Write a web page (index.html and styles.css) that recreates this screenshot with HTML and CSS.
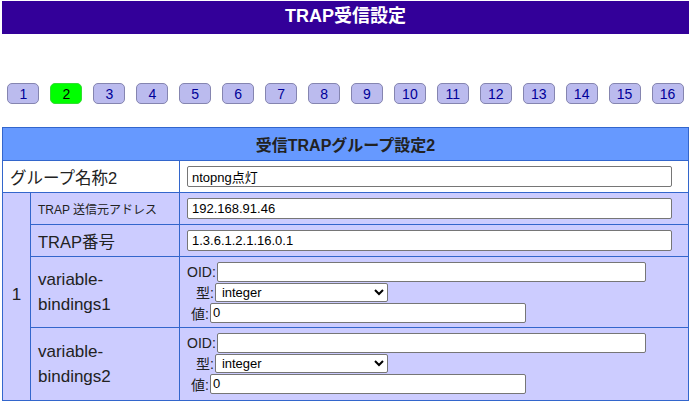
FILE: index.html
```html
<!DOCTYPE html>
<html lang="ja">
<head>
    <meta charset="UTF-8">
    <title>TRAP受信設定</title>
    <link rel="stylesheet" href="styles.css">
</head>
<body>
    <div class="title">TRAP受信設定</div>

    <div class="tabs">
        <button class="tab">1</button>
        <button class="tab active">2</button>
        <button class="tab">3</button>
        <button class="tab">4</button>
        <button class="tab">5</button>
        <button class="tab">6</button>
        <button class="tab">7</button>
        <button class="tab">8</button>
        <button class="tab">9</button>
        <button class="tab">10</button>
        <button class="tab">11</button>
        <button class="tab">12</button>
        <button class="tab">13</button>
        <button class="tab">14</button>
        <button class="tab">15</button>
        <button class="tab">16</button>
    </div>

    <table class="group">
        <tr>
            <th colspan="3">受信TRAPグループ設定2</th>
        </tr>
        <tr class="name-row">
            <td colspan="2" class="label">グループ名称2</td>
            <td class="value"><input type="text" class="wide" value="ntopng点灯"></td>
        </tr>
        <tr>
            <td rowspan="4" class="num">1</td>
            <td class="label small">TRAP 送信元アドレス</td>
            <td class="value"><input type="text" class="wide" value="192.168.91.46"></td>
        </tr>
        <tr>
            <td class="label">TRAP番号</td>
            <td class="value"><input type="text" class="wide" value="1.3.6.1.2.1.16.0.1"></td>
        </tr>
        <tr>
            <td class="label latin">variable-<br>bindings1</td>
            <td class="value binds">
                <div class="line oid">OID:<input type="text"></div>
                <div class="line type">型:<select><option>integer</option></select></div>
                <div class="line val">値:<input type="text" value="0"></div>
            </td>
        </tr>
        <tr class="last">
            <td class="label latin">variable-<br>bindings2</td>
            <td class="value binds">
                <div class="line oid">OID:<input type="text"></div>
                <div class="line type">型:<select><option>integer</option></select></div>
                <div class="line val">値:<input type="text" value="0"></div>
            </td>
        </tr>
    </table>
</body>
</html>
```

FILE: styles.css
```css
body {
    margin: 1px 4px 0 2px;
    font-family: "Liberation Sans", "Noto Sans CJK JP", sans-serif;
    background: white;
    color: #222;
}
.title {
    background: #330099;
    color: white;
    font-weight: bold;
    font-size: 18px;
    text-align: center;
    height: 33px;
    line-height: 31px;
}
.tabs {
    display: grid;
    grid-template-columns: repeat(16, 1fr);
    justify-items: center;
    margin-top: 49px;
}
.tab {
    width: 32px;
    height: 21px;
    padding: 0;
    font-family: "Liberation Sans", sans-serif;
    font-size: 14px;
    color: #000099;
    background: #bbbbee;
    border: 1px solid #8585b0;
    border-radius: 5px;
}
.tab.active {
    background: #00ff00;
    border-color: #33dd33;
    color: #000;
}
.group {
    margin-top: 23px;
    width: 100%;
    border-collapse: collapse;
    border: 1px solid #3366cc;
}
.group th, .group td {
    border: 1px solid #3366cc;
    vertical-align: middle;
}
.group th {
    background: #6699ff;
    height: 32px;
    font-size: 16px;
    color: #222;
    padding: 0;
}
.group td {
    background: #ccccff;
}
.name-row td {
    background: white;
}
.group td.num {
    width: 27px;
    padding: 92px 0 0 0;
    vertical-align: top;
    line-height: 20px;
    text-align: center;
    font-size: 17px;
}
.label {
    width: 134px;
    padding: 0 7px;
    font-size: 16.5px;
    color: #222;
}
.label.small {
    font-size: 12px;
}
.label.latin {
    font-size: 17px;
    line-height: 25px;
}
.value {
    padding: 5px 8px 5px 7px;
    height: 21px;
}
input, select {
    font-family: "Liberation Sans", "Noto Sans CJK JP", sans-serif;
    font-size: 13px;
    color: #000;
    border: 1px solid #767676;
    border-radius: 2px;
    background: white;
    box-sizing: border-box;
    margin: 0;
}
input {
    height: 21px;
    padding: 0 4px;
}
.wide {
    width: 485px;
}
.binds {
    padding: 4px 8px 4px 7px;
    font-size: 14px;
}
.last .binds {
    padding-bottom: 6px;
}
.line {
    height: 21px;
    display: flex;
    align-items: center;
}
.line.oid input {
    width: 429px;
    height: 20px;
    margin-left: 1px;
}
.line.type {
    height: 20px;
    padding-left: 9px;
}
.line.type select {
    width: 173px;
    height: 19px;
    padding: 0 2px;
    margin-left: 1px;
}
.line.val {
    padding-left: 4px;
}
.line.val input {
    width: 316px;
    height: 20px;
    margin-left: 1px;
    padding: 0 2px;
}
```
